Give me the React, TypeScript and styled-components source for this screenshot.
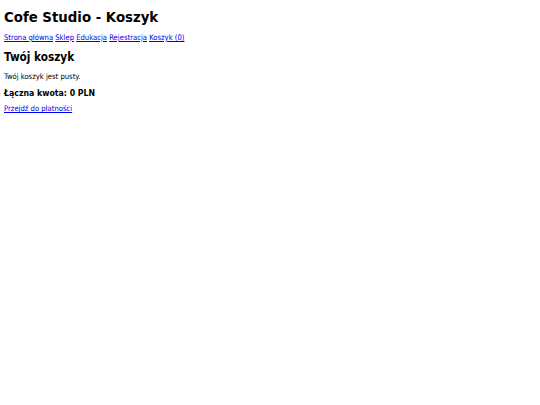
import { Fragment } from "react";
import styled, { createGlobalStyle } from "styled-components";

const GlobalStyle = createGlobalStyle`
  body {
    margin: 0;
    padding: 4px;
    font-family: "DejaVu Sans Condensed", "DejaVu Sans", sans-serif;
    font-stretch: condensed;
    font-size: 7.6px;
    line-height: 10px;
    color: #000;
    background: #fff;
  }
`;

const Page = styled.div`
  display: flex;
  flex-direction: column;
  align-items: flex-start;
`;

const Title = styled.h1`
  margin: 5px 0 8px;
  font-size: 14.8px;
  line-height: 16px;
`;

const Nav = styled.nav`
  white-space: nowrap;
`;

const NavLink = styled.a`
  color: #0000ee;
  text-decoration: underline;
`;

const Section = styled.h2`
  margin: 6.6px 0 0;
  font-size: 11.7px;
  line-height: 14px;
`;

const Text = styled.p`
  margin: 8px 0 0;
`;

const Total = styled.h3`
  margin: 6.5px 0 0;
  font-size: 8.7px;
  line-height: 11px;
`;

const CheckoutLink = styled.a`
  margin-top: 5px;
  color: #0000ee;
  text-decoration: underline;
`;

const links = ["Strona główna", "Sklep", "Edukacja", "Rejestracja", "Koszyk (0)"];

export default function App() {
  return (
    <Page>
      <GlobalStyle />
      <Title>Cofe Studio - Koszyk</Title>
      <Nav>
        {links.map((l, i) => (
          <Fragment key={l}>
            {i > 0 && " "}
            <NavLink href="#">{l}</NavLink>
          </Fragment>
        ))}
      </Nav>
      <Section>Twój koszyk</Section>
      <Text>Twój koszyk jest pusty.</Text>
      <Total>Łączna kwota: 0 PLN</Total>
      <CheckoutLink href="#">Przejdź do płatności</CheckoutLink>
    </Page>
  );
}
